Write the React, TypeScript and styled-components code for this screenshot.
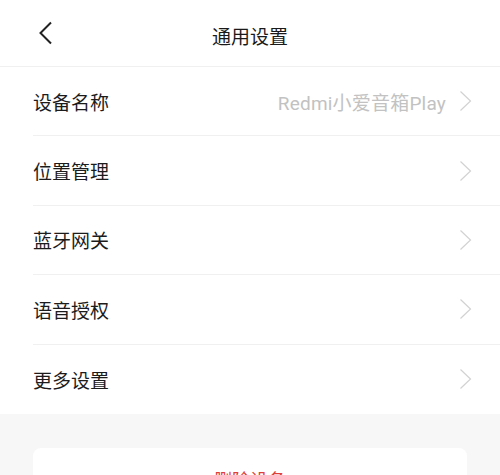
import { createGlobalStyle, styled } from "styled-components";

const GlobalStyle = createGlobalStyle`
    html, body {
        margin: 0;
        padding: 0;
        background: #f7f7f7;
    }
    body {
        font-family: "Roboto", "Noto Sans CJK SC", sans-serif;
        -webkit-font-smoothing: antialiased;
    }
`

const Page = styled.div`
    width: 500px;
    height: 475px;
    overflow: hidden;
    background: #f7f7f7;
    display: flex;
    flex-direction: column;
`

const Header = styled.header`
    height: 67px;
    flex-shrink: 0;
    background: #fff;
    border-bottom: 1px solid #f0f0f0;
    box-sizing: border-box;
    display: grid;
    grid-template-columns: 80px 1fr 80px;
    align-items: center;
`

const BackButton = styled.button`
    border: 0;
    background: none;
    padding: 0 0 0 38px;
    height: 100%;
    display: flex;
    align-items: center;
    cursor: pointer;
`

const Title = styled.h1`
    margin: 0;
    text-align: center;
    font-size: 19px;
    font-weight: 400;
    color: #1a1a1a;
    padding-top: 4px;
`

const List = styled.ul`
    list-style: none;
    margin: 0;
    padding: 0 0 0 33px;
    background: #fff;
`

const Row = styled.li<{ $last?: boolean }>`
    height: 69.4px;
    display: flex;
    align-items: center;
    padding-right: 28px;
    box-sizing: border-box;
    border-bottom: ${p => (p.$last ? "none" : "1px solid #f0f0f0")};
    cursor: pointer;
`

const Label = styled.span`
    font-size: 19px;
    color: #1c1c1c;
    flex: 1;
`

const Value = styled.span`
    font-size: 19px;
    color: #c2c2c2;
    margin-right: 13px;
    letter-spacing: 0.2px;
`

const Footer = styled.div`
    padding: 34px 33px 0 33px;
`

const DeleteButton = styled.button`
    width: 100%;
    height: 56px;
    border: 0;
    border-radius: 8px;
    background: #fff;
    color: #e0403a;
    font-family: inherit;
    font-size: 18px;
    padding-top: 8px;
    cursor: pointer;
`

const rows = [
    { label: "设备名称", value: "Redmi小爱音箱Play" },
    { label: "位置管理" },
    { label: "蓝牙网关" },
    { label: "语音授权" },
    { label: "更多设置" },
]

function Chevron() {
    return (
        <svg width="13" height="22" viewBox="0 0 13 22" fill="none">
            <path d="M1.5 1.5 L11.5 11 L1.5 20.5" stroke="#d2d2d2" strokeWidth="1.2" />
        </svg>
    )
}

export default function App() {
    return (
        <>
            <GlobalStyle />
            <Page>
                <Header>
                    <BackButton aria-label="返回">
                        <svg width="15" height="24" viewBox="0 0 15 24" fill="none">
                            <path d="M13 1.5 L2.5 12 L13 22.5" stroke="#222" strokeWidth="2" />
                        </svg>
                    </BackButton>
                    <Title>通用设置</Title>
                    <div />
                </Header>
                <List>
                    {rows.map((row, i) => (
                        <Row key={row.label} $last={i === rows.length - 1}>
                            <Label>{row.label}</Label>
                            {row.value && <Value>{row.value}</Value>}
                            <Chevron />
                        </Row>
                    ))}
                </List>
                <Footer>
                    <DeleteButton>删除设备</DeleteButton>
                </Footer>
            </Page>
        </>
    )
}
